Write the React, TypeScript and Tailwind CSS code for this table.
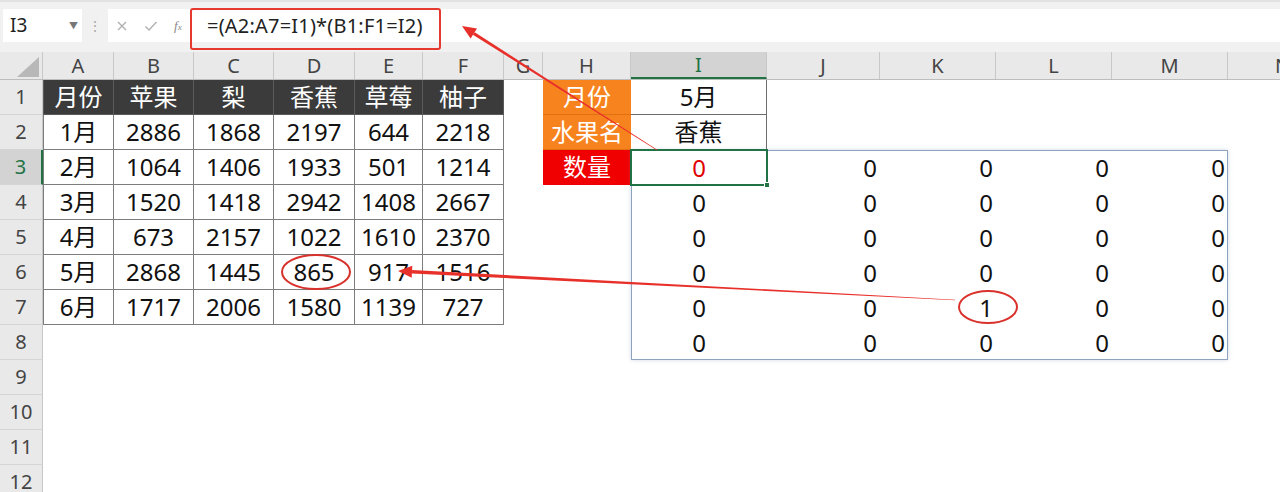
import React from "react";

const COLS: { key: string; w: number }[] = [
  { key: "A", w: 71 },
  { key: "B", w: 80 },
  { key: "C", w: 80 },
  { key: "D", w: 81 },
  { key: "E", w: 68 },
  { key: "F", w: 81 },
  { key: "G", w: 39 },
  { key: "H", w: 88 },
  { key: "I", w: 136 },
  { key: "J", w: 113 },
  { key: "K", w: 116 },
  { key: "L", w: 116 },
  { key: "M", w: 116 },
  { key: "N", w: 110 },
];

const fruitHeader = ["月份", "苹果", "梨", "香蕉", "草莓", "柚子"];
const fruitRows = [
  ["1月", "2886", "1868", "2197", "644", "2218"],
  ["2月", "1064", "1406", "1933", "501", "1214"],
  ["3月", "1520", "1418", "2942", "1408", "2667"],
  ["4月", "673", "2157", "1022", "1610", "2370"],
  ["5月", "2868", "1445", "865", "917", "1516"],
  ["6月", "1717", "2006", "1580", "1139", "727"],
];

const FONT = { fontFamily: '"Noto Sans", "Noto Sans CJK SC", sans-serif' };

function Cell({
  w,
  className = "",
  children,
}: {
  w: number;
  className?: string;
  children?: React.ReactNode;
}) {
  return (
    <div
      className={`h-[35px] shrink-0 flex items-center ${className}`}
      style={{ width: w }}
    >
      {children}
    </div>
  );
}

function RowHeader({ n }: { n: number }) {
  const active = n === 3;
  return (
    <div
      className={`w-[43px] h-[35px] shrink-0 flex items-center justify-center text-[20px] border-b border-[#d4d4d4] ${
        active
          ? "bg-[#d3d3d3] text-[#217346] border-r-2 border-r-[#217346]"
          : "bg-[#e9e9e9] text-[#444] border-r border-r-[#c8c8c8]"
      }`}
    >
      {n}
    </div>
  );
}

function Row({ n }: { n: number }) {
  const cells: React.ReactNode[] = [];
  COLS.forEach((c, ci) => {
    let content: React.ReactNode = null;
    let cls = "";
    if (ci <= 5 && n <= 7) {
      const text = n === 1 ? fruitHeader[ci] : fruitRows[n - 2][ci];
      cls =
        "justify-center border-r border-b " +
        (n === 1
          ? "bg-[#3b3b3b] text-white border-[#5a5a5a]"
          : "bg-white text-[#111] border-[#7d7d7d]") +
        (ci === 0 ? " border-l" : "");
      content = text;
    } else if (c.key === "H" && n <= 3) {
      const labels = ["月份", "水果名", "数量"];
      cls =
        "justify-center text-white border-b " +
        (n === 3 ? "bg-[#f00000] border-[#f00000]" : "bg-[#f7831f] border-[#e07010]");
      content = labels[n - 1];
    } else if (c.key === "I" && n <= 2) {
      cls = "justify-center bg-white text-[#111] border-r border-b border-[#6d6d6d]";
      content = n === 1 ? "5月" : "香蕉";
    } else if (n >= 3 && n <= 8 && ci >= 8 && ci <= 12) {
      const val = n === 7 && c.key === "K" ? "1" : "0";
      if (c.key === "I") {
        cls = "justify-center " + (n === 3 ? "text-[#e00000]" : "text-[#111]");
      } else {
        cls = "justify-end pr-[3px] text-[#111]";
      }
      content = val;
    }
    cells.push(
      <Cell key={c.key} w={c.w} className={cls}>
        {content}
      </Cell>
    );
  });
  return (
    <div className="flex text-[24px] leading-none">
      <RowHeader n={n} />
      {cells}
    </div>
  );
}

function Arrows() {
  return (
    <svg
      className="absolute left-0 top-0 pointer-events-none"
      width={1280}
      height={492}
      viewBox="0 0 1280 492"
    >
      <polygon
        points="474.7,32.2 472.9,34.8 656.8,150.3 657.2,149.7"
        fill="#e8302a"
      />
      <polygon points="462,26 477,28.4 470.6,38.6" fill="#e8302a" />
      <polygon
        points="412.1,269.9 411.9,273.5 955,300.3 955,299.7"
        fill="#e8302a"
      />
      <polygon points="398,271 412.3,265.7 411.7,277.7" fill="#e8302a" />
      <ellipse
        cx={316}
        cy={272}
        rx={34}
        ry={17}
        fill="none"
        stroke="#d9312b"
        strokeWidth={2}
      />
      <ellipse
        cx={988}
        cy={307}
        rx={29}
        ry={16}
        fill="none"
        stroke="#d9312b"
        strokeWidth={2}
      />
    </svg>
  );
}

export default function App() {
  return (
    <div
      className="relative w-[1280px] h-[492px] overflow-hidden bg-white"
      style={FONT}
    >
      {/* formula bar */}
      <div className="h-[52px] bg-[#f1f1f1] border-t-2 border-[#e2e2e2] flex items-start pt-[7px] pl-[3px]">
        <div className="w-[79px] h-[33px] bg-white flex items-center justify-between pl-[7px] pr-[4px]">
          <span className="text-[19px] text-[#222]">I3</span>
          <span className="text-[9px] text-[#777]">▼</span>
        </div>
        <div className="w-[26px] h-[33px] flex items-center justify-center text-[#aaa] text-[14px]">
          ⋮
        </div>
        <div className="flex-1 h-[33px] bg-white flex items-center">
          <div className="w-[82px] flex items-center pl-[8px] gap-[16px] text-[#a8a8a8]">
            <svg width="12" height="12" viewBox="0 0 12 12">
              <path d="M2 2 L10 10 M10 2 L2 10" stroke="#b0b0b0" strokeWidth="1.4" />
            </svg>
            <svg width="14" height="12" viewBox="0 0 14 12">
              <path d="M1.5 6.5 L5 10 L12.5 2" stroke="#b0b0b0" strokeWidth="1.4" fill="none" />
            </svg>
            <span
              className="text-[13px] italic text-[#888]"
              style={{ fontFamily: '"Liberation Serif", serif' }}
            >
              f<span className="text-[9px]">x</span>
            </span>
          </div>
          <div className="pl-[17px] text-[20px] text-[#222] tracking-[0.2px]">
            =(A2:A7=I1)*(B1:F1=I2)
          </div>
        </div>
      </div>

      {/* column headers */}
      <div className="flex h-[28px] bg-[#e9e9e9] border-b border-[#bdbdbd]">
        <div className="w-[43px] shrink-0 relative border-r border-[#c8c8c8]">
          <svg className="absolute left-[17px] top-[5px]" width="22" height="20" viewBox="0 0 22 20">
            <polygon points="22,0 22,20 0,20" fill="#b8b8b8" />
          </svg>
        </div>
        {COLS.map((c) => (
          <div
            key={c.key}
            className={`shrink-0 flex items-center justify-center text-[20px] ${
              c.key === "I"
                ? "bg-[#d3d3d3] text-[#217346] border-b-2 border-[#217346] border-r border-r-[#c8c8c8]"
                : "text-[#444] border-r border-[#c8c8c8]"
            }`}
            style={{ width: c.w }}
          >
            {c.key}
          </div>
        ))}
      </div>

      {/* rows */}
      {Array.from({ length: 12 }, (_, i) => (
        <Row key={i} n={i + 1} />
      ))}

      {/* spill range border */}
      <div className="absolute left-[631px] top-[150px] w-[597px] h-[210px] border border-[#8ea4be] shadow-[0_0_4px_rgba(120,140,170,0.35)] pointer-events-none" />
      {/* active cell selection */}
      <div className="absolute left-[630px] top-[149px] w-[138px] h-[37px] border-2 border-[#217346] pointer-events-none" />
      <div className="absolute left-[764px] top-[182px] w-[6px] h-[6px] bg-[#217346] border border-white pointer-events-none" />

      {/* red box around formula */}
      <div className="absolute left-[190px] top-[8px] w-[251px] h-[42px] border-2 border-[#e53930] rounded-[3px] pointer-events-none" />

      <Arrows />
    </div>
  );
}
